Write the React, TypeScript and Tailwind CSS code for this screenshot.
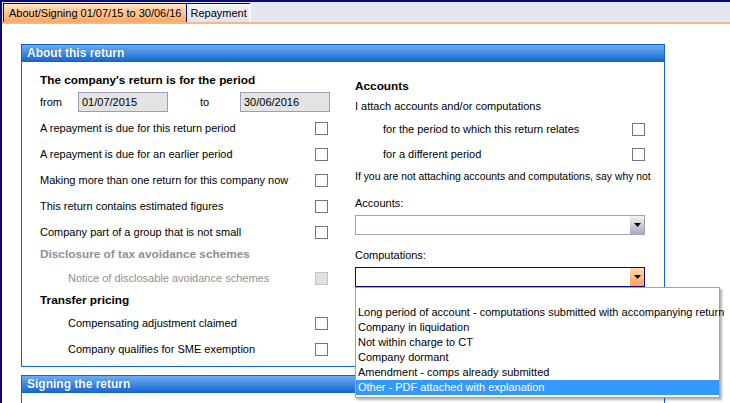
import React from "react";

const leftRows = [
  "A repayment is due for this return period",
  "A repayment is due for an earlier period",
  "Making more than one return for this company now",
  "This return contains estimated figures",
  "Company part of a group that is not small",
];

const reasons = [
  "",
  "Long period of account - computations submitted with accompanying return",
  "Company in liquidation",
  "Not within charge to CT",
  "Company dormant",
  "Amendment - comps already submitted",
  "Other - PDF attached with explanation",
];

function Box({ disabled = false }: { disabled?: boolean }) {
  return (
    <div
      className={
        disabled
          ? "w-[13px] h-[13px] border border-[#c4c4c4] bg-[#e2e2e2] shrink-0"
          : "w-[13px] h-[13px] border border-[#767676] bg-white shrink-0"
      }
    />
  );
}

function Arrow() {
  return (
    <svg width="7" height="4" viewBox="0 0 7 4">
      <polygon points="0,0 7,0 3.5,4" fill="#000" />
    </svg>
  );
}

function CheckRow({
  label,
  indent = false,
  disabled = false,
  h = "h-[26px]",
}: {
  label: string;
  indent?: boolean;
  disabled?: boolean;
  h?: string;
}) {
  return (
    <div className={`flex items-center justify-between ${h}`}>
      <span className={`${indent ? "pl-[28px]" : ""} ${disabled ? "text-[#8f8f8f]" : ""}`}>
        {label}
      </span>
      <Box disabled={disabled} />
    </div>
  );
}

function PanelHeader({ title }: { title: string }) {
  return (
    <div className="h-[18px] flex items-center pl-[5px] border border-[#1464c8] bg-gradient-to-b from-[#6aaef6] to-[#1768cf] text-white font-bold text-[12px] [text-shadow:0_0_1px_#0a3f8c]">
      {title}
    </div>
  );
}

export default function App() {
  return (
    <div className="w-[730px] h-[403px] overflow-hidden bg-white border-l-2 border-t-2 border-[#0b0b78] font-['Liberation_Sans',Arial,sans-serif] text-[11px] text-black">
      {/* tab strip */}
      <div className="flex h-[22px] pt-[1px] pl-[1px] bg-[#e4e7f0] border-b-2 border-[#ffb67a]">
        <div className="h-full flex items-center px-[5px] border-t border-l border-r border-[#0b0b78] bg-gradient-to-b from-[#ffe2c4] to-[#ffa75c]">
          About/Signing 01/07/15 to 30/06/16
        </div>
        <div className="h-full flex items-center pl-[3px] pr-[2px] border-t border-[#0b0b78] bg-gradient-to-b from-[#f4f5fa] to-[#dfe3ee] border-r-2 border-r-[#f8f8f8]">
          Repayment
        </div>
      </div>

      {/* about this return */}
      <div className="ml-[19px] mt-[20px] w-[644px]">
        <PanelHeader title="About this return" />
        <div className="h-[305px] border-x border-b border-[#1464c8] flex">
          <div className="w-[318px] pl-[18px] pt-[10px]">
            <div className="h-[17px] flex items-center font-bold text-[11.8px]">
              The company's return is for the period
            </div>
            <div className="mt-[3px] h-[20px] flex items-center">
              <span className="w-[38px]">from</span>
              <div className="w-[90px] h-[20px] flex items-center pl-[3px] bg-[#e3e3e3] border border-[#9d9db3]">
                01/07/2015
              </div>
              <span className="ml-[32px] w-[40px]">to</span>
              <div className="w-[90px] h-[20px] flex items-center pl-[3px] bg-[#e3e3e3] border border-[#9d9db3]">
                30/06/2016
              </div>
            </div>
            <div className="mt-[3px] pr-[12px]">
              {leftRows.map((r) => (
                <CheckRow key={r} label={r} />
              ))}
              <div className="h-[20px] flex items-center font-bold text-[11.8px] text-[#8f8f8f]">
                Disclosure of tax avoidance schemes
              </div>
              <CheckRow label="Notice of disclosable avoidance schemes" indent disabled />
              <div className="h-[19px] flex items-center font-bold text-[11.8px]">
                Transfer pricing
              </div>
              <CheckRow label="Compensating adjustment claimed" indent />
              <CheckRow label="Company qualifies for SME exemption" indent />
            </div>
          </div>

          <div className="ml-[15px] w-[290px] pt-[16px]">
            <div className="h-[18px] flex items-center font-bold text-[11.8px]">Accounts</div>
            <div className="mt-[1px] h-[18px] flex items-center">
              I attach accounts and/or computations
            </div>
            <div className="mt-[1px] pl-[28px]">
              <CheckRow label="for the period to which this return relates" />
              <CheckRow label="for a different period" h="h-[25px]" />
            </div>
            <div className="mt-[1px] h-[18px] flex items-center text-[10.4px] whitespace-nowrap">
              If you are not attaching accounts and computations, say why not
            </div>
            <div className="mt-[8px] h-[18px] flex items-center">Accounts:</div>
            <div className="mt-[3px] h-[20px] flex border border-[#a3a3ba] bg-white">
              <div className="flex-1" />
              <div className="w-[14px] flex items-center justify-center bg-gradient-to-b from-[#f2f2f7] to-[#a9a9c2]">
                <Arrow />
              </div>
            </div>
            <div className="mt-[11px] h-[18px] flex items-center">Computations:</div>
            <div className="relative mt-[3px] h-[20px] flex border border-[#0b0b78] bg-white">
              <div className="flex-1" />
              <div className="w-[14px] flex items-center justify-center bg-gradient-to-b from-[#ffd9b4] to-[#ff9f55]">
                <Arrow />
              </div>
              <div className="absolute left-[-1px] top-[19px] w-[365px] py-[2px] bg-white border border-[#a4a4a4] shadow-[2px_2px_2px_rgba(0,0,0,0.3)] z-10">
                {reasons.map((r, i) => (
                  <div
                    key={i}
                    className={`h-[15px] flex items-center pl-[2px] whitespace-nowrap ${
                      i === reasons.length - 1 ? "bg-[#3399ff] text-white" : ""
                    }`}
                  >
                    {r}
                  </div>
                ))}
              </div>
            </div>
          </div>
        </div>
      </div>

      {/* signing the return */}
      <div className="ml-[19px] mt-[8px] w-[644px]">
        <PanelHeader title="Signing the return" />
        <div className="h-[60px] border-x border-[#1464c8]" />
      </div>
    </div>
  );
}
